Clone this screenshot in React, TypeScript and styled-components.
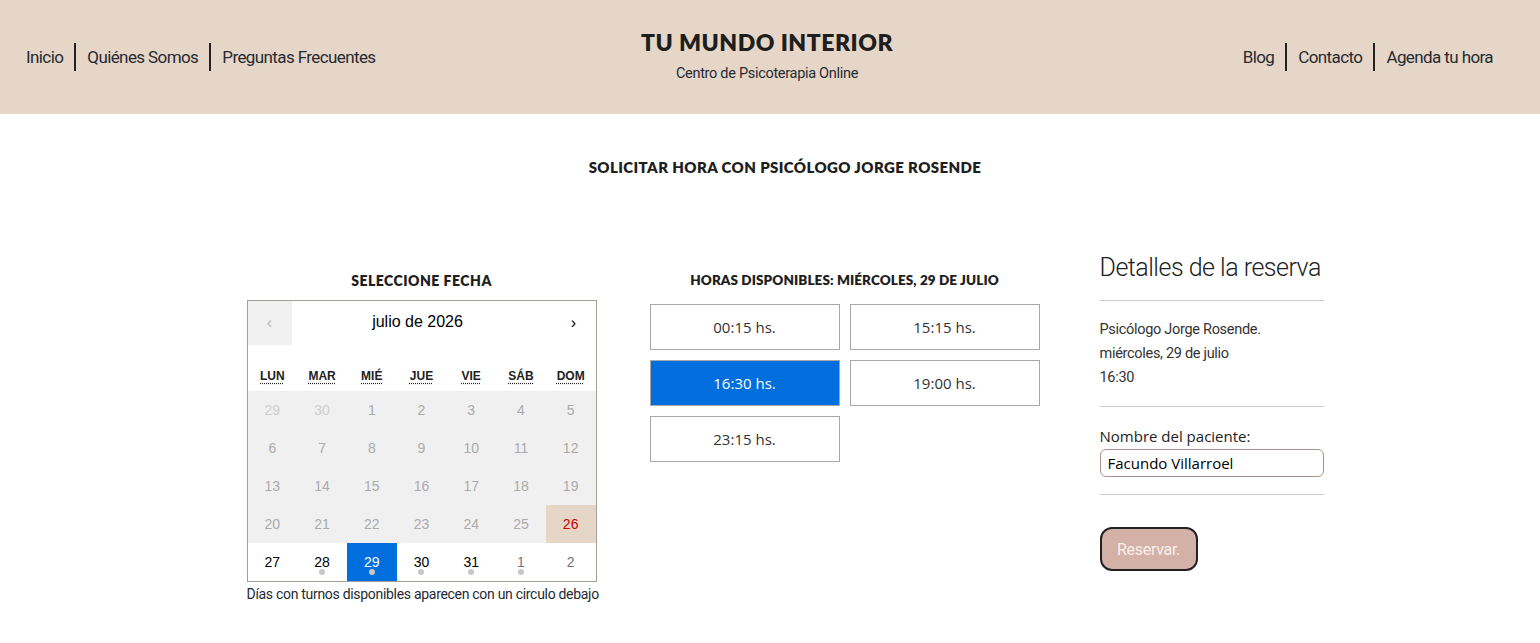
import React from "react";
import styled, { createGlobalStyle } from "styled-components";

const GlobalStyle = createGlobalStyle`
  body {
    margin: 0;
    background: #ffffff;
    font-family: "Open Sans", sans-serif;
    color: #222;
  }
`;

const narrow = `"Roboto", "Liberation Sans", sans-serif`;
const heading = `"Lato", "Open Sans", sans-serif`;

const Header = styled.header`
  display: grid;
  grid-template-columns: 1fr auto 1fr;
  align-items: center;
  height: 114px;
  padding: 0 36px 0 30px;
  background: #e6d6c7;
`;

const Nav = styled.nav<{ $end?: boolean }>`
  display: flex;
  align-items: center;
  justify-content: ${(p) => (p.$end ? "flex-end" : "flex-start")};
  margin-left: ${(p) => (p.$end ? "0" : "-15px")};
`;

const NavLink = styled.a`
  font-family: ${narrow};
  font-size: 17px;
  letter-spacing: -0.6px;
  color: #262a33;
  text-decoration: none;
  padding: 0 11px;
  line-height: 28px;
  & + & {
    border-left: 2px solid #222;
  }
`;

const Brand = styled.div`
  display: flex;
  flex-direction: column;
  align-items: center;
  padding-bottom: 2px;
`;

const BrandTitle = styled.div`
  font-family: ${heading};
  font-weight: 800;
  font-size: 23px;
  letter-spacing: 0.5px;
  color: #1e1e1e;
  line-height: 30px;
`;

const BrandSub = styled.div`
  font-family: ${narrow};
  font-size: 14.5px;
  letter-spacing: -0.3px;
  color: #262a33;
  line-height: 22px;
  margin-top: 6px;
`;

const Main = styled.main`
  padding-left: 30px;
  display: flex;
  flex-direction: column;
  align-items: center;
`;

const PageTitle = styled.h1`
  margin: 43px 0 0;
  font-family: ${heading};
  font-weight: 800;
  font-size: 15px;
  letter-spacing: 0.4px;
  color: #1e1e1e;
  line-height: 20px;
`;

const Columns = styled.div`
  display: flex;
  align-items: flex-start;
  margin-top: 73px;
`;

const CalendarCol = styled.section`
  width: 350px;
  display: flex;
  flex-direction: column;
  padding-top: 22px;
`;

const SectionTitle = styled.h2<{ $tight?: boolean }>`
  margin: 0 0 10px;
  text-align: center;
  font-family: ${heading};
  font-weight: 800;
  font-size: ${(p) => (p.$tight ? "13.5px" : "14px")};
  letter-spacing: ${(p) => (p.$tight ? "0.1px" : "0.5px")};
  color: #1e1e1e;
  line-height: 18px;
`;

const Calendar = styled.div`
  border: 1px solid #a0a096;
  font-family: "Liberation Sans", Arial, sans-serif;
  background: #fff;
`;

const CalNav = styled.div`
  display: flex;
  height: 44px;
  align-items: stretch;
`;

const NavArrow = styled.button<{ $disabled?: boolean }>`
  width: 44px;
  border: none;
  background: ${(p) => (p.$disabled ? "#f0f0f0" : "#fff")};
  color: ${(p) => (p.$disabled ? "#b8b8b8" : "#000")};
  font-size: 16px;
  font-family: inherit;
  padding: 0;
`;

const MonthLabel = styled.div`
  flex: 1;
  display: flex;
  align-items: center;
  justify-content: center;
  font-size: 16px;
  color: #000;
  padding-right: 8px;
  padding-bottom: 2px;
`;

const Weekdays = styled.div`
  display: grid;
  grid-template-columns: repeat(7, 1fr);
  height: 46px;
  align-items: end;
  padding-bottom: 8px;
  box-sizing: border-box;
`;

const Weekday = styled.abbr`
  text-align: center;
  font-size: 12px;
  font-weight: 700;
  color: #222;
  text-decoration: underline dotted;
  text-underline-offset: 3px;
  justify-self: center;
`;

const Days = styled.div`
  display: grid;
  grid-template-columns: repeat(7, 1fr);
`;

type Tone = "off" | "past" | "holiday" | "open" | "next" | "selected";

const toneBg: Record<Tone, string> = {
  off: "#f0f0f0",
  past: "#f0f0f0",
  holiday: "#e6d6c7",
  open: "#fff",
  next: "#fff",
  selected: "#006edc",
};

const toneColor: Record<Tone, string> = {
  off: "#cfcfcf",
  past: "#ababab",
  holiday: "#d10000",
  open: "#000",
  next: "#757575",
  selected: "#fff",
};

const Day = styled.div<{ $tone: Tone }>`
  position: relative;
  height: 38px;
  display: flex;
  align-items: center;
  justify-content: center;
  font-size: 14px;
  background: ${(p) => toneBg[p.$tone]};
  color: ${(p) => toneColor[p.$tone]};
`;

const Dot = styled.span`
  position: absolute;
  left: 50%;
  bottom: 6px;
  width: 6px;
  height: 6px;
  margin-left: -3px;
  border-radius: 50%;
  background: #cac6c6;
`;

const Caption = styled.p`
  margin: 4px 0 0;
  font-family: ${narrow};
  font-size: 14px;
  letter-spacing: -0.3px;
  white-space: nowrap;
  color: #262a33;
`;

const HoursCol = styled.section`
  width: 390px;
  margin-left: 53px;
  padding-top: 21px;
`;

const Slots = styled.div`
  display: grid;
  grid-template-columns: repeat(2, 190px);
  column-gap: 10px;
  row-gap: 10px;
  margin-top: 15px;
`;

const Slot = styled.button<{ $active?: boolean }>`
  height: 46px;
  border: 1px solid #a8a8a8;
  background: ${(p) => (p.$active ? "#006edc" : "#fff")};
  color: ${(p) => (p.$active ? "#fff" : "#333")};
  font-family: "Open Sans", sans-serif;
  font-size: 15px;
`;

const DetailsCol = styled.aside`
  width: 224px;
  margin-left: 60px;
`;

const DetailsTitle = styled.h3`
  margin: 0;
  font-family: ${narrow};
  font-weight: 300;
  font-size: 25px;
  letter-spacing: -0.5px;
  white-space: nowrap;
  line-height: 36px;
  color: #222;
`;

const Rule = styled.hr<{ $top: number }>`
  border: none;
  border-top: 1px solid #cccccc;
  margin: ${(p) => p.$top}px 0 0;
`;

const Summary = styled.div`
  margin-top: 17px;
  font-family: ${narrow};
  font-size: 14.5px;
  letter-spacing: -0.3px;
  line-height: 24px;
  color: #333;
`;

const FieldLabel = styled.label`
  display: block;
  margin-top: 19px;
  font-size: 15px;
  color: #222;
  line-height: 20px;
`;

const TextInput = styled.input`
  display: block;
  width: 100%;
  box-sizing: border-box;
  height: 28px;
  margin-top: 3px;
  padding: 0 7px;
  border: 1px solid #a89288;
  border-radius: 6px;
  font-family: "Open Sans", sans-serif;
  font-size: 15px;
  color: #000;
`;

const SubmitButton = styled.button`
  margin-top: 32px;
  width: 98px;
  height: 44px;
  border: 2px solid #222;
  border-radius: 12px;
  background: #d4b1a6;
  color: #f7f0ec;
  font-family: ${narrow};
  font-size: 16px;
  letter-spacing: -0.3px;
`;

const weekdays = ["LUN", "MAR", "MIÉ", "JUE", "VIE", "SÁB", "DOM"];

const days: { n: number; tone: Tone; dot?: boolean }[] = [
  { n: 29, tone: "off" },
  { n: 30, tone: "off" },
  ...Array.from({ length: 26 }, (_, i) => ({
    n: i + 1,
    tone: (i + 1 === 26 ? "holiday" : "past") as Tone,
  })),
  { n: 27, tone: "open" },
  { n: 28, tone: "open", dot: true },
  { n: 29, tone: "selected", dot: true },
  { n: 30, tone: "open", dot: true },
  { n: 31, tone: "open", dot: true },
  { n: 1, tone: "next", dot: true },
  { n: 2, tone: "next" },
];

const slots = ["00:15", "15:15", "16:30", "19:00", "23:15"];

const App: React.FC = () => {
  return (
    <>
      <GlobalStyle />
      <Header>
        <Nav>
          <NavLink>Inicio</NavLink>
          <NavLink>Quiénes Somos</NavLink>
          <NavLink>Preguntas Frecuentes</NavLink>
        </Nav>
        <Brand>
          <BrandTitle>TU MUNDO INTERIOR</BrandTitle>
          <BrandSub>Centro de Psicoterapia Online</BrandSub>
        </Brand>
        <Nav $end>
          <NavLink>Blog</NavLink>
          <NavLink>Contacto</NavLink>
          <NavLink>Agenda tu hora</NavLink>
        </Nav>
      </Header>
      <Main>
        <PageTitle>SOLICITAR HORA CON PSICÓLOGO JORGE ROSENDE</PageTitle>
        <Columns>
          <CalendarCol>
            <SectionTitle>SELECCIONE FECHA</SectionTitle>
            <Calendar>
              <CalNav>
                <NavArrow $disabled>‹</NavArrow>
                <MonthLabel>julio de 2026</MonthLabel>
                <NavArrow>›</NavArrow>
              </CalNav>
              <Weekdays>
                {weekdays.map((d) => (
                  <Weekday key={d}>{d}</Weekday>
                ))}
              </Weekdays>
              <Days>
                {days.map((d, i) => (
                  <Day key={i} $tone={d.tone}>
                    {d.n}
                    {d.dot && <Dot />}
                  </Day>
                ))}
              </Days>
            </Calendar>
            <Caption>Días con turnos disponibles aparecen con un circulo debajo</Caption>
          </CalendarCol>
          <HoursCol>
            <SectionTitle $tight>HORAS DISPONIBLES: MIÉRCOLES, 29 DE JULIO</SectionTitle>
            <Slots>
              {slots.map((s) => (
                <Slot key={s} $active={s === "16:30"}>
                  {s} hs.
                </Slot>
              ))}
            </Slots>
          </HoursCol>
          <DetailsCol>
            <DetailsTitle>Detalles de la reserva</DetailsTitle>
            <Rule $top={14} />
            <Summary>
              Psicólogo Jorge Rosende.
              <br />
              miércoles, 29 de julio
              <br />
              16:30
            </Summary>
            <Rule $top={16} />
            <FieldLabel>Nombre del paciente:</FieldLabel>
            <TextInput defaultValue="Facundo Villarroel" />
            <Rule $top={17} />
            <SubmitButton>Reservar.</SubmitButton>
          </DetailsCol>
        </Columns>
      </Main>
    </>
  );
};

export default App;
